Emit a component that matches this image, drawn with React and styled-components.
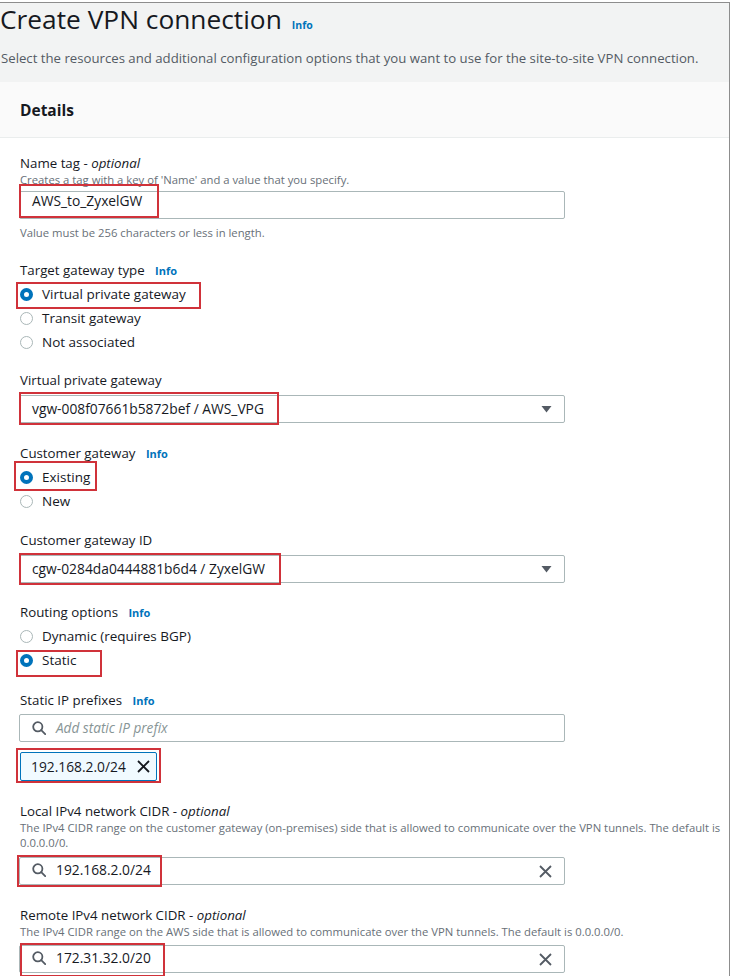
import React from "react";
import styled, { createGlobalStyle } from "styled-components";

const GlobalStyle = createGlobalStyle`
    html, body {
        margin: 0;
        padding: 0;
        background: #ffffff;
    }
    body {
        font-family: "Open Sans", "Noto Sans", Arial, sans-serif;
        color: #16191f;
    }
    * {
        box-sizing: border-box;
    }
`;

const Frame = styled.div`
    width: 730px;
    height: 974px;
    margin-top: 2px;
    border-top: 1px solid #8d8d8d;
    border-right: 1px solid #8d8d8d;
    overflow: hidden;
`;

const PageHeader = styled.div`
    background: #f2f3f3;
    height: 79px;
    display: flex;
    flex-direction: column;
`;

const TitleRow = styled.div`
    display: flex;
    align-items: baseline;
    gap: 10px;
    height: 36px;
`;

const Title = styled.h1`
    margin: 0;
    font-weight: 400;
    font-size: 26.3px;
    line-height: 32px;
    color: #16191f;
`;

const Info = styled.span`
    font-size: ${(p) => p.$size || 11}px;
    line-height: 1;
    font-weight: 700;
    color: #0073bb;
    margin-left: ${(p) => p.$gap ?? 7}px;
`;

const Subtitle = styled.p`
    margin: 10px 0 0 1px;
    font-size: 13.2px;
    line-height: 18px;
    color: #545b64;
    white-space: nowrap;
`;

const PanelHead = styled.div`
    height: 56px;
    background: #fafafa;
    border-bottom: 1px solid #eaeded;
    display: flex;
    align-items: center;
    padding-left: 20px;
    font-size: 15.5px;
    font-weight: 700;
    color: #16191f;
`;

const Body = styled.div`
    padding: 16px 0 0 19px;
    display: flex;
    flex-direction: column;
`;

const Field = styled.div`
    display: flex;
    flex-direction: column;
    margin-top: ${(p) => p.$top ?? 20}px;
`;

const Label = styled.div`
    font-size: 13.3px;
    line-height: 18px;
    height: 18px;
    padding-left: 1px;
    color: #16191f;

    em {
        font-style: italic;
    }
`;

const Desc = styled.div`
    margin-top: ${(p) => p.$top ?? 0}px;
    font-size: 11.3px;
    line-height: 15px;
    padding-left: 1px;
    color: #687078;
    max-width: 708px;
`;

const Control = styled.div`
    margin-top: ${(p) => p.$top ?? 5}px;
    width: 546px;
    height: 28px;
    border: 1px solid #aab7b8;
    border-radius: 2px;
    background: #ffffff;
    display: flex;
    align-items: center;
    padding: 0 12px;
    gap: 10px;
    font-size: 13.8px;
    line-height: 18px;
    color: #16191f;
`;

const Grow = styled.span`
    flex: 1;
`;

const Lead = styled.span`
    display: inline-flex;
    align-items: center;
    gap: 10px;
`;

const Placeholder = styled.span`
    flex: 1;
    font-style: italic;
    color: #879596;
    font-size: 13.6px;
`;

const Mark = styled.span`
    position: relative;
    display: inline-block;
    align-self: flex-start;

    &::after {
        content: "";
        position: absolute;
        top: ${(p) => p.$t}px;
        right: ${(p) => p.$r}px;
        bottom: ${(p) => p.$b}px;
        left: ${(p) => p.$l}px;
        border: 2px solid #d0323a;
        pointer-events: none;
    }
`;

const TokenMark = styled(Mark)`
    margin-top: 10px;
`;

const RadioList = styled.div`
    margin-top: 3px;
    display: flex;
    flex-direction: column;
`;

const RadioRow = styled.div`
    height: 24px;
    display: flex;
    align-items: center;
    gap: 9px;
    padding-left: 1px;
    font-size: 13.5px;
    color: #16191f;
`;

const Dot = styled.span`
    width: 13px;
    height: 13px;
    border-radius: 50%;
    flex: none;
    border: ${(p) => (p.$on ? "4px solid #0073bb" : "1px solid #aab7b8")};
    background: #ffffff;
`;

const Token = styled.div`
    width: 137px;
    height: 29px;
    margin-left: 1px;
    border: 1px solid #0073bb;
    border-radius: 2px;
    background: #f1faff;
    display: flex;
    align-items: center;
    justify-content: space-between;
    padding: 0 6px 0 10px;
    font-size: 13.8px;
    color: #16191f;
`;

const Caret = () => (
    <svg width="11" height="8" viewBox="0 0 11 8">
        <path d="M0.5 1h10L5.5 7.5z" fill="#545b64" />
    </svg>
);

const Search = () => (
    <svg width="14" height="14" viewBox="0 0 14 14" fill="none" stroke="#545b64" strokeWidth="1.8">
        <circle cx="5.8" cy="5.8" r="4.6" />
        <path d="M9.2 9.2l4 4" strokeLinecap="round" />
    </svg>
);

const Close = ({ color = "#545b64" }) => (
    <svg width="13" height="13" viewBox="0 0 13 13" fill="none" stroke={color} strokeWidth="1.8">
        <path d="M1 1l11 11M12 1L1 12" />
    </svg>
);

const Radios = ({ items }) => (
    <RadioList>
        {items.map((it) => {
            const row = (
                <RadioRow key={it.label}>
                    <Dot $on={it.on} />
                    <span>{it.label}</span>
                </RadioRow>
            );
            if (!it.mark) return row;
            const [t, r, b, l] = it.mark;
            return (
                <Mark key={it.label} $t={t} $r={r} $b={b} $l={l}>
                    {row}
                </Mark>
            );
        })}
    </RadioList>
);

export default function App() {
    return (
        <>
            <GlobalStyle />
            <Frame>
                <PageHeader>
                    <TitleRow>
                        <Title>Create VPN connection</Title>
                        <Info $size={10.5} $gap={0}>Info</Info>
                    </TitleRow>
                    <Subtitle>
                        Select the resources and additional configuration options that you want to use for the site-to-site VPN connection.
                    </Subtitle>
                </PageHeader>

                <PanelHead>Details</PanelHead>

                <Body>
                    <Field $top={0}>
                        <Label>Name tag - <em>optional</em></Label>
                        <Desc>Creates a tag with a key of 'Name' and a value that you specify.</Desc>
                        <Control $top={4}>
                            <Mark $t={-8} $r={-17} $b={-8} $l={-13}>AWS_to_ZyxelGW</Mark>
                        </Control>
                        <Desc $top={6}>Value must be 256 characters or less in length.</Desc>
                    </Field>

                    <Field $top={21}>
                        <Label>Target gateway type <Info>Info</Info></Label>
                        <Radios
                            items={[
                                { label: "Virtual private gateway", on: true, mark: [0, -15, -3, -3] },
                                { label: "Transit gateway" },
                                { label: "Not associated" },
                            ]}
                        />
                    </Field>

                    <Field $top={17}>
                        <Label>Virtual private gateway</Label>
                        <Control $top={6}>
                            <Grow>
                                <Mark $t={-8} $r={-15} $b={-7} $l={-13}>vgw-008f07661b5872bef / AWS_VPG</Mark>
                            </Grow>
                            <Caret />
                        </Control>
                    </Field>

                    <Field $top={21}>
                        <Label>Customer gateway <Info>Info</Info></Label>
                        <Radios
                            items={[
                                { label: "Existing", on: true, mark: [-4, -7, -2, -5] },
                                { label: "New" },
                            ]}
                        />
                    </Field>

                    <Field $top={18}>
                        <Label>Customer gateway ID</Label>
                        <Control $top={6}>
                            <Grow>
                                <Mark $t={-7} $r={-16} $b={-7} $l={-13}>cgw-0284da0444881b6d4 / ZyxelGW</Mark>
                            </Grow>
                            <Caret />
                        </Control>
                    </Field>

                    <Field $top={20}>
                        <Label>Routing options <Info>Info</Info></Label>
                        <Radios
                            items={[
                                { label: "Dynamic (requires BGP)" },
                                { label: "Static", on: true, mark: [2, -26, -5, -3] },
                            ]}
                        />
                    </Field>

                    <Field $top={19}>
                        <Label>Static IP prefixes <Info>Info</Info></Label>
                        <Control $top={5}>
                            <Search />
                            <Placeholder>Add static IP prefix</Placeholder>
                        </Control>
                        <TokenMark $t={-4} $r={-4} $b={-2} $l={-3}>
                            <Token>
                                <span>192.168.2.0/24</span>
                                <Close color="#16191f" />
                            </Token>
                        </TokenMark>
                    </Field>

                    <Field $top={21}>
                        <Label>Local IPv4 network CIDR - <em>optional</em></Label>
                        <Desc>
                            The IPv4 CIDR range on the customer gateway (on-premises) side that is allowed to communicate over the VPN tunnels. The default is 0.0.0.0/0.
                        </Desc>
                        <Control $top={7}>
                            <Grow>
                                <Mark $t={-6} $r={-11} $b={-6} $l={-15}>
                                    <Lead>
                                        <Search />
                                        <span>192.168.2.0/24</span>
                                    </Lead>
                                </Mark>
                            </Grow>
                            <Close color="#545b64" />
                        </Control>
                    </Field>

                    <Field $top={21}>
                        <Label>Remote IPv4 network CIDR - <em>optional</em></Label>
                        <Desc>The IPv4 CIDR range on the AWS side that is allowed to communicate over the VPN tunnels. The default is 0.0.0.0/0.</Desc>
                        <Control $top={6}>
                            <Grow>
                                <Mark $t={-6} $r={-14} $b={-8} $l={-12}>
                                    <Lead>
                                        <Search />
                                        <span>172.31.32.0/20</span>
                                    </Lead>
                                </Mark>
                            </Grow>
                            <Close color="#545b64" />
                        </Control>
                    </Field>
                </Body>
            </Frame>
        </>
    );
}
